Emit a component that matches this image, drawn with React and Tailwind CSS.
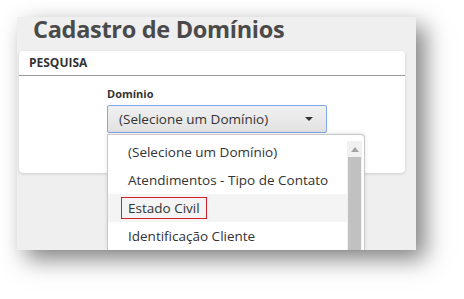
export default function App() {
  const items = [
    "(Selecione um Domínio)",
    "Atendimentos - Tipo de Contato",
    "Estado Civil",
    "Identificação Cliente",
  ];
  return (
    <div className="w-[464px] h-[299px] bg-white pt-[17px] pl-[17px]" style={{ fontFamily: '"Open Sans", "Noto Sans", sans-serif' }}>
      <div className="relative w-[399px] h-[233px] bg-[#efefef] shadow-[9px_9px_22px_rgba(0,0,0,0.5)]">
        <div className="pl-[16px] h-[27px] flex items-end">
          <h1 className="text-[23.5px] leading-[30px] font-bold text-[#4a4a4a] tracking-[-0.3px]">Cadastro de Domínios</h1>
        </div>
        <div className="mt-[7px] ml-[2px] w-[386px] h-[122px] bg-white rounded-[4px] shadow-[0_1px_3px_rgba(0,0,0,0.15)]">
          <div className="h-[25px] border-b border-[#999] pl-[10px] flex items-center">
            <span className="text-[12px] font-bold text-[#333]">PESQUISA</span>
          </div>
          <div className="pl-[88px] pt-[10px]">
            <div className="text-[11px] font-bold text-[#333] leading-[15px]">Domínio</div>
            <div className="mt-[4px] w-[220px] h-[28px] border border-[#7fa8ea] rounded-[2px] bg-gradient-to-b from-[#f0f0f0] to-[#e2e2e2] flex items-center justify-between pl-[11px] pr-[13px]">
              <span className="text-[13.5px] text-[#333]">(Selecione um Domínio)</span>
              <svg width="8" height="4" viewBox="0 0 8 4"><path d="M0 0 L8 0 L4 4 Z" fill="#333" /></svg>
            </div>
          </div>
        </div>
        <div className="absolute left-[90px] top-[117px] w-[258px] h-[116px] overflow-hidden bg-white border border-b-0 border-[#c8c8c8] rounded-tr-[4px] shadow-[0_-1px_4px_rgba(0,0,0,0.1)] flex">
          <div className="flex-1 pt-[3px]">
            {items.map((t, i) => (
              <div key={i} className={`h-[28px] flex items-center pl-[20px] ${i === 2 ? "bg-[#f4f4f4]" : ""}`}>
                {i === 2 ? (
                  <span className="-ml-[7px] px-[6px] h-[22px] flex items-center border border-[#d0212b] text-[13.5px] text-[#333]">{t}</span>
                ) : (
                  <span className="text-[13.5px] text-[#333]">{t}</span>
                )}
              </div>
            ))}
          </div>
          <div className="w-[15px] mr-[2px] mt-[6px] bg-[#f1f1f1] flex flex-col">
            <div className="h-[16px] flex items-center justify-center">
              <svg width="8" height="5" viewBox="0 0 8 5"><path d="M0 5 L4 0 L8 5 Z" fill="#a3a3a3" /></svg>
            </div>
            <div className="flex-1 bg-[#c1c1c1] mx-[1px]"></div>
          </div>
        </div>
      </div>
    </div>
  );
}
